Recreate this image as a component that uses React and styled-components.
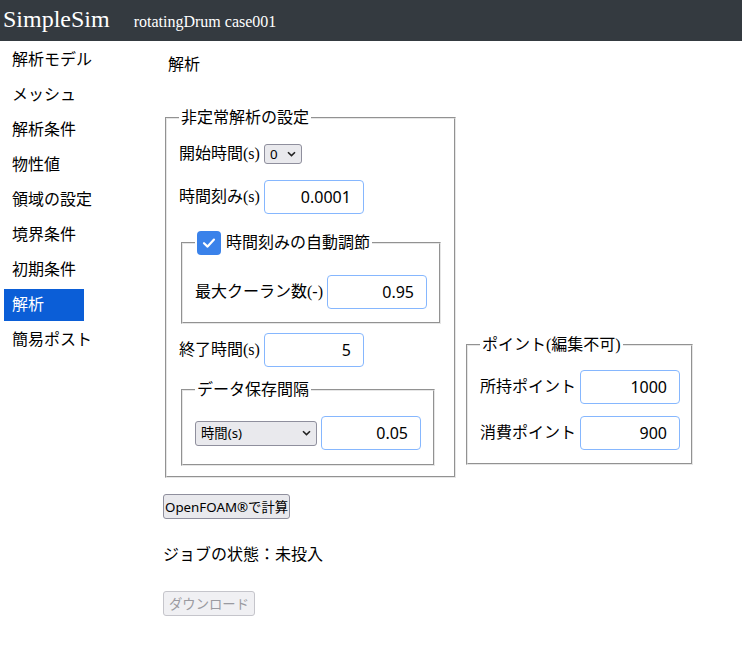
import React from 'react';
import styled, { createGlobalStyle } from 'styled-components';

const GlobalStyle = createGlobalStyle`
  body {
    margin: 0;
    background: #fff;
    color: #000;
    font-family: 'Liberation Serif', 'Noto Sans CJK JP', serif;
  }
`;

const Header = styled.header`
  display: flex;
  align-items: baseline;
  height: 41px;
  padding-left: 3px;
  background-color: #343a40;
  color: #fff;
`;

const Brand = styled.span`
  font-size: 24px;
  line-height: 38px;
`;

const CaseName = styled.span`
  font-size: 16px;
  margin-left: 24px;
`;

const Layout = styled.div`
  display: flex;
  align-items: flex-start;
`;

const Sidebar = styled.nav`
  width: 163px;
  flex-shrink: 0;
  box-sizing: border-box;
  padding-left: 4px;
`;

const NavItem = styled.div`
  box-sizing: border-box;
  width: 80px;
  height: 32px;
  margin-top: 3px;
  padding-left: 8px;
  font-size: 16px;
  line-height: 32px;
  white-space: nowrap;
  background-color: ${(props) => (props.$active ? '#0b5ed7' : 'transparent')};
  color: ${(props) => (props.$active ? '#fff' : '#000')};
`;

const Main = styled.main`
  flex: 1;
  display: flex;
  flex-direction: column;
  align-items: flex-start;
`;

const PageTitle = styled.div`
  margin-top: 13px;
  padding-left: 5px;
  font-size: 16px;
  line-height: 22px;
`;

const FieldsetRow = styled.div`
  display: flex;
  align-items: flex-end;
  margin-top: 31px;
`;

const Group = styled.fieldset`
  box-sizing: border-box;
  width: ${(props) => props.$width}px;
  min-width: 0;
  margin: ${(props) => props.$margin || '0 2px'};
  padding: 0 12px ${(props) => props.$padBottom}px;
  border: 2px groove #e6e6e6;
`;

const Legend = styled.legend`
  display: flex;
  align-items: center;
  gap: 5px;
  padding: 0 2px;
  font-size: 16px;
  line-height: ${(props) => props.$height || 22}px;
  white-space: nowrap;
`;

const CheckBox = styled.span`
  display: inline-flex;
  align-items: center;
  justify-content: center;
  width: 24px;
  height: 24px;
  border-radius: 4px;
  background-color: #3a82ea;
`;

const Row = styled.div`
  display: flex;
  align-items: center;
  gap: 4px;
  margin-top: ${(props) => props.$top}px;
`;

const Label = styled.label`
  font-size: 16px;
  line-height: 22px;
  white-space: nowrap;
`;

const NumberInput = styled.input`
  box-sizing: border-box;
  width: 100px;
  height: 34px;
  padding: 0 12px;
  border: 1px solid #86b7fe;
  border-radius: 4px;
  background: #fff;
  color: #000;
  font-family: 'Noto Sans', 'Noto Sans CJK JP', sans-serif;
  font-size: 16px;
  text-align: right;
  outline: none;
`;

const SelectWrap = styled.span`
  position: relative;
  display: inline-flex;
  width: ${(props) => props.$width}px;
  height: ${(props) => props.$height}px;
`;

const Select = styled.select`
  appearance: none;
  box-sizing: border-box;
  width: 100%;
  height: 100%;
  padding: 0 0 0 5px;
  border: 1px solid #8f8f9d;
  border-radius: 3px;
  background-color: #e9e9ed;
  color: #000;
  font-family: 'Noto Sans', 'Noto Sans CJK JP', sans-serif;
  font-size: 13.33px;
  outline: none;
`;

const Chevron = styled.svg`
  position: absolute;
  right: 6px;
  top: 50%;
  transform: translateY(-50%);
  pointer-events: none;
`;

const ActionButton = styled.button`
  box-sizing: border-box;
  height: 25px;
  margin-top: ${(props) => props.$top}px;
  padding: 0 ${(props) => props.$pad}px;
  border: 1px solid ${(props) => (props.disabled ? '#c5c5cb' : '#8f8f9d')};
  border-radius: 3px;
  background-color: ${(props) => (props.disabled ? '#f0f0f3' : '#e9e9ed')};
  color: ${(props) => (props.disabled ? '#9a9aa0' : '#000')};
  font-family: 'Noto Sans', 'Noto Sans CJK JP', sans-serif;
  font-size: 13.33px;
  white-space: nowrap;
`;

const Status = styled.div`
  margin-top: 25px;
  font-size: 16px;
  line-height: 22px;
`;

const navItems = ['解析モデル', 'メッシュ', '解析条件', '物性値', '領域の設定', '境界条件', '初期条件', '解析', '簡易ポスト'];

const ChevronIcon = () => (
  <Chevron width="9" height="6" viewBox="0 0 9 6">
    <path d="M1 1.2 L4.5 4.6 L8 1.2" fill="none" stroke="#222" strokeWidth="1.6" />
  </Chevron>
);

const Dropdown = ({ width, height, value, options }) => (
  <SelectWrap $width={width} $height={height}>
    <Select defaultValue={value}>
      {options.map((o) => (
        <option key={o} value={o}>
          {o}
        </option>
      ))}
    </Select>
    <ChevronIcon />
  </SelectWrap>
);

const App = () => {
  return (
    <>
      <GlobalStyle />
      <Header>
        <Brand>SimpleSim</Brand>
        <CaseName>rotatingDrum case001</CaseName>
      </Header>
      <Layout>
        <Sidebar>
          {navItems.map((item) => (
            <NavItem key={item} $active={item === '解析'}>
              {item}
            </NavItem>
          ))}
        </Sidebar>
        <Main>
          <PageTitle>解析</PageTitle>
          <FieldsetRow>
            <Group $width={291} $padBottom={10}>
              <Legend>非定常解析の設定</Legend>
              <Row $top={14}>
                <Label>開始時間(s)</Label>
                <Dropdown width={38} height={20} value="0" options={['0']} />
              </Row>
              <Row $top={15}>
                <Label>時間刻み(s)</Label>
                <NumberInput defaultValue="0.0001" />
              </Row>
              <Group $width={260} $padBottom={13} $margin="17px 2px 0">
                <Legend $height={24}>
                  <CheckBox>
                    <svg width="16" height="16" viewBox="0 0 16 16">
                      <path d="M3 8.2 L6.6 11.6 L13 4.6" fill="none" stroke="#fff" strokeWidth="2.2" strokeLinecap="round" strokeLinejoin="round" />
                    </svg>
                  </CheckBox>
                  時間刻みの自動調節
                </Legend>
                <Row $top={20}>
                  <Label>最大クーラン数(-)</Label>
                  <NumberInput defaultValue="0.95" />
                </Row>
              </Group>
              <Row $top={9}>
                <Label>終了時間(s)</Label>
                <NumberInput defaultValue="5" />
              </Row>
              <Group $width={254} $padBottom={14} $margin="12px 2px 0">
                <Legend>データ保存間隔</Legend>
                <Row $top={15}>
                  <Dropdown width={122} height={25} value="時間(s)" options={['時間(s)', 'ステップ']} />
                  <NumberInput defaultValue="0.05" />
                </Row>
              </Group>
            </Group>
            <Group $width={227} $padBottom={13} $margin="0 2px 13px 8px">
              <Legend>ポイント(編集不可)</Legend>
              <Row $top={14}>
                <Label>所持ポイント</Label>
                <NumberInput defaultValue="1000" readOnly />
              </Row>
              <Row $top={12}>
                <Label>消費ポイント</Label>
                <NumberInput defaultValue="900" readOnly />
              </Row>
            </Group>
          </FieldsetRow>
          <ActionButton $top={16} $pad={1}>OpenFOAM®で計算</ActionButton>
          <Status>ジョブの状態：未投入</Status>
          <ActionButton $top={25} $pad={5} disabled>
            ダウンロード
          </ActionButton>
        </Main>
      </Layout>
    </>
  );
};

export default App;
